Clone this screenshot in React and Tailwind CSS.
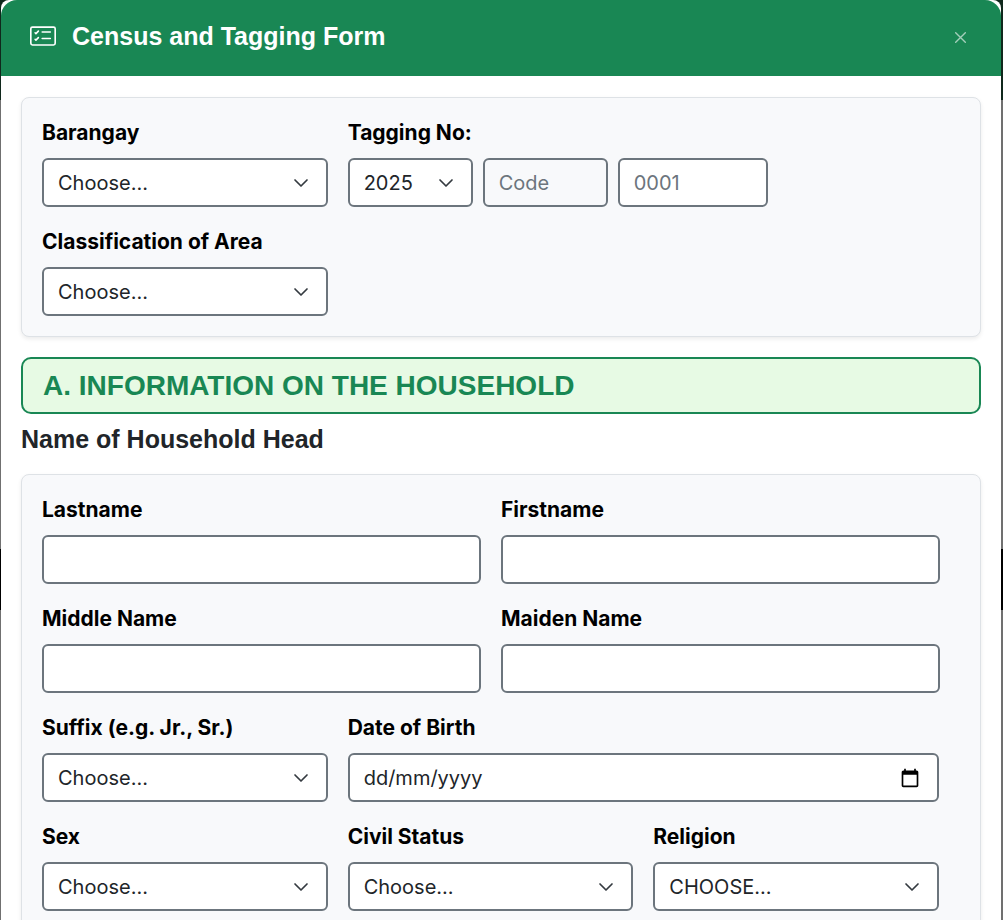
import { useId } from "react";
import { BsCardChecklist } from "react-icons/bs";

const control =
  "h-[49px] w-full rounded-md border-2 border-[#6c757d] px-3.5 text-xl text-[#212529] outline-none focus:border-[#198754]";

function Select({ id, options = ["Choose..."], label }) {
  return (
    <div className="grid items-center">
      <select
        id={id}
        aria-label={label}
        className={`${control} col-start-1 row-start-1 appearance-none bg-white pr-11`}
      >
        {options.map((o) => (
          <option key={o}>{o}</option>
        ))}
      </select>
      <svg
        viewBox="0 0 16 16"
        className="pointer-events-none col-start-1 row-start-1 mr-[19px] size-4 justify-self-end"
        fill="none"
        stroke="#343a40"
        strokeWidth="1.7"
        strokeLinecap="round"
        strokeLinejoin="round"
        aria-hidden="true"
      >
        <path d="m2 5 6 6 6-6" />
      </svg>
    </div>
  );
}

function Label(props) {
  return (
    <label
      className="block h-[30px] text-[21px] leading-[30px] font-bold whitespace-nowrap text-black"
      {...props}
    />
  );
}

function SelectField({ label, options }) {
  const id = useId();
  return (
    <div className="flex min-w-0 flex-col gap-2.5">
      <Label htmlFor={id}>{label}</Label>
      <Select id={id} options={options} />
    </div>
  );
}

function TextField({ label }) {
  const id = useId();
  return (
    <div className="flex min-w-0 flex-col gap-2.5">
      <Label htmlFor={id}>{label}</Label>
      <input id={id} type="text" className={`${control} bg-white`} />
    </div>
  );
}

function DateField({ label }) {
  const id = useId();
  return (
    <div className="col-span-2 flex min-w-0 flex-col gap-2.5">
      <Label htmlFor={id}>{label}</Label>
      <div className="grid items-center">
        <input
          id={id}
          type="text"
          inputMode="numeric"
          placeholder="dd/mm/yyyy"
          className={`${control} col-start-1 row-start-1 bg-white pr-12 placeholder-[#212529]`}
        />
        <button
          type="button"
          aria-label="Open calendar"
          className="col-start-1 row-start-1 mr-[19px] justify-self-end"
        >
          <svg viewBox="0 0 24 24" className="size-5" fill="#000" aria-hidden="true">
            <path d="M20 3h-1V1h-2v2H7V1H5v2H4c-1.1 0-2 .9-2 2v16c0 1.1.9 2 2 2h16c1.1 0 2-.9 2-2V5c0-1.1-.9-2-2-2zm0 18H4V8h16v13z" />
          </svg>
        </button>
      </div>
    </div>
  );
}

function Card({ children }) {
  return (
    <section className="flex flex-col gap-5 rounded-lg border border-[#dee2e6] bg-[#f8f9fb] py-5 pr-10 pl-5 shadow-[0_2px_4px_rgba(0,0,0,0.08)]">
      {children}
    </section>
  );
}

export default function App() {
  return (
    <div className="h-screen overflow-y-auto bg-[linear-gradient(to_bottom,#10281c_0,#10281c_100px,#707070_100px,#707070_549px,#000_549px,#000_610px,#707070_610px)] pr-0.5 pl-px font-['Inter','Noto_Sans',sans-serif] [scrollbar-width:none]">
      <main className="min-h-full rounded-t-lg bg-white">
        <header className="flex h-[76px] items-center justify-between rounded-t-2xl bg-[#198754] pr-[35px] pb-1 pl-[29px] text-white">
          <div className="flex items-center gap-4">
            <BsCardChecklist className="size-[26px]" aria-hidden="true" />
            <h1 className="font-['Liberation_Sans',sans-serif] text-[25px] leading-8 font-bold">
              Census and Tagging Form
            </h1>
          </div>
          <button type="button" aria-label="Close" className="mt-0.5 opacity-60">
            <svg viewBox="0 0 16 16" className="size-[11px]" fill="none" stroke="#fff" strokeWidth="2" strokeLinecap="round">
              <path d="m1 1 14 14M15 1 1 15" />
            </svg>
          </button>
        </header>

        <form className="px-5 py-[21px]" onSubmit={(e) => e.preventDefault()}>
          <Card>
            <div className="grid grid-cols-3 gap-5 pr-px">
              <SelectField label="Barangay" />
              <div className="col-span-2 flex flex-col gap-2.5">
                <Label htmlFor="tag-year">Tagging No:</Label>
                <div className="flex gap-2.5">
                  <div className="w-[125px]">
                    <Select id="tag-year" options={["2025"]} />
                  </div>
                  <div className="w-[125px]">
                    <input aria-label="Code" placeholder="Code" readOnly className={`${control} bg-[#f8f9fb] placeholder-[#6c757d]`} />
                  </div>
                  <div className="w-[150px]">
                    <input aria-label="Number" placeholder="0001" className={`${control} bg-white placeholder-[#6c757d]`} />
                  </div>
                </div>
              </div>
              <SelectField label="Classification of Area" />
            </div>
          </Card>

          <h2 className="mt-5 rounded-[10px] border-2 border-[#198754] bg-[#e7fae4] px-5 py-2 font-['Liberation_Sans',sans-serif] text-[28px] leading-[37px] font-bold text-[#198754]">
            A. INFORMATION ON THE HOUSEHOLD
          </h2>
          <h3 className="mt-2.5 mb-5 font-['Liberation_Sans',sans-serif] text-[25px] leading-[30px] font-bold text-[#212529]">
            Name of Household Head
          </h3>

          <Card>
            <div className="grid grid-cols-2 gap-5">
              <TextField label="Lastname" />
              <TextField label="Firstname" />
              <TextField label="Middle Name" />
              <TextField label="Maiden Name" />
            </div>
            <div className="grid grid-cols-3 gap-5 pr-px">
              <SelectField label="Suffix (e.g. Jr., Sr.)" />
              <DateField label="Date of Birth" />
              <SelectField label="Sex" />
              <SelectField label="Civil Status" />
              <SelectField label="Religion" options={["CHOOSE..."]} />
            </div>
          </Card>
        </form>
      </main>
    </div>
  );
}
